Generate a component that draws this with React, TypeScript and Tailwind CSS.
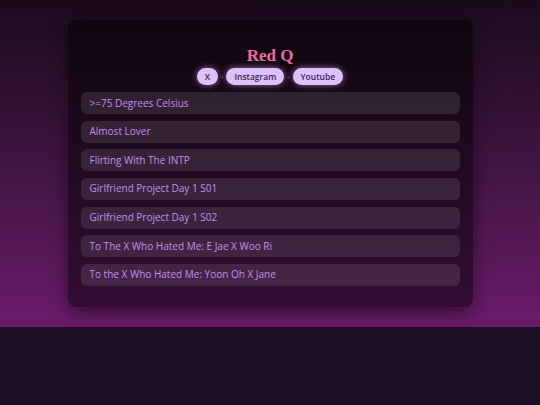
import React from 'react';

const links = ['X', 'Instagram', 'Youtube'];

const posts = [
  '>=75 Degrees Celsius',
  'Almost Lover',
  'Flirting With The INTP',
  'Girlfriend Project Day 1 S01',
  'Girlfriend Project Day 1 S02',
  'To The X Who Hated Me: E Jae X Woo Ri',
  'To the X Who Hated Me: Yoon Oh X Jane',
];

const App: React.FC = () => {
  return (
    <div className="min-h-screen bg-[#1e0f22] font-['Open_Sans',sans-serif]">
      <div className="bg-gradient-to-b from-[#1a0b1c] to-[#6b1b6c] py-5">
        {/* Card */}
        <div className="mx-auto w-3/4 rounded-lg bg-black/50 px-[13px] pt-[24px] pb-[21px] shadow-[0_6px_18px_rgba(0,0,0,0.45)]">
          <h1 className="text-center font-['Liberation_Serif',serif] text-[17px] leading-[24px] font-bold text-[#ec6ba0]">
            Red Q
          </h1>

          {/* Links */}
          <div className="flex items-center justify-center gap-[3px]">
            {links.map((link, i) => (
              <React.Fragment key={link}>
                {i > 0 && <span className="text-[7px] leading-none text-[#b28ad0]">-</span>}
                <span className="rounded-full bg-[#dcc2fb] px-[8px] py-[3px] text-[8.5px] leading-[11px] font-semibold text-[#3b1f52] shadow-[0_0_6px_rgba(214,170,255,0.6)]">
                  {link}
                </span>
              </React.Fragment>
            ))}
          </div>

          {/* Posts */}
          <div className="mt-[7px] flex flex-col gap-[6.67px]">
            {posts.map((post) => (
              <div
                key={post}
                className="flex h-[22px] items-center rounded-md bg-white/10 px-[9px] text-[10px] text-[#c28ef0]"
              >
                {post}
              </div>
            ))}
          </div>
        </div>
      </div>
    </div>
  );
};

export default App;
